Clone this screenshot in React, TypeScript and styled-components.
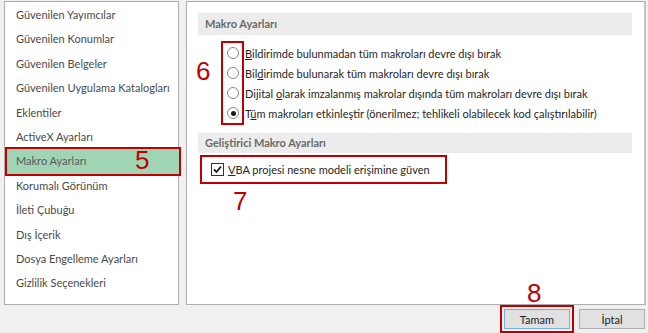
import styled, { createGlobalStyle } from "styled-components";

const GlobalStyle = createGlobalStyle`
  html, body {
    margin: 0;
    padding: 0;
    background: #f0f0f0;
  }
`;

const sidebarItems = [
  "Güvenilen Yayımcılar",
  "Güvenilen Konumlar",
  "Güvenilen Belgeler",
  "Güvenilen Uygulama Katalogları",
  "Eklentiler",
  "ActiveX Ayarları",
  "Makro Ayarları",
  "Korumalı Görünüm",
  "İleti Çubuğu",
  "Dış İçerik",
  "Dosya Engelleme Ayarları",
  "Gizlilik Seçenekleri",
];

const SELECTED = 6;

const macroOptions = [
  { pre: "", key: "B", post: "ildirimde bulunmadan tüm makroları devre dışı bırak" },
  { pre: "Bil", key: "d", post: "irimde bulunarak tüm makroları devre dışı bırak" },
  { pre: "Dijital ", key: "o", post: "larak imzalanmış makrolar dışında tüm makroları devre dışı bırak" },
  { pre: "T", key: "ü", post: "m makroları etkinleştir (önerilmez; tehlikeli olabilecek kod çalıştırılabilir)" },
];

const App = () => {
  return (
    <Window>
      <GlobalStyle />
      <Panels>
        <Sidebar>
          {sidebarItems.map((label, i) => (
            <SidebarItem key={label} $selected={i === SELECTED}>
              {label}
            </SidebarItem>
          ))}
        </Sidebar>

        <Content>
          <SectionTitle>Makro Ayarları</SectionTitle>
          <OptionList>
            {macroOptions.map((o, i) => (
              <OptionRow key={i}>
                <Radio $checked={i === 3} />
                <span>
                  {o.pre}
                  <u>{o.key}</u>
                  {o.post}
                </span>
              </OptionRow>
            ))}
          </OptionList>

          <SectionTitle $compact>Geliştirici Makro Ayarları</SectionTitle>
          <CheckRow>
            <CheckBox>
              <svg width="9" height="9" viewBox="0 0 9 9">
                <path d="M1 4.5 L3.5 7 L8 1.5" fill="none" stroke="#1a1a1a" strokeWidth="1.8" />
              </svg>
            </CheckBox>
            <span>
              <u>V</u>BA projesi nesne modeli erişimine güven
            </span>
          </CheckRow>
        </Content>
      </Panels>

      <Footer>
        <Button $primary>Tamam</Button>
        <Button>İptal</Button>
      </Footer>

      {/* kırmızı açıklama işaretleri */}
      <RadioMark />
      <Num style={{ left: 135, top: 147 }}>5</Num>
      <Num style={{ left: 196, top: 58 }}>6</Num>
      <Num style={{ left: 233, top: 188 }}>7</Num>
      <Num style={{ left: 527, top: 280 }}>8</Num>
    </Window>
  );
};

const Window = styled.div`
  position: relative;
  width: 648px;
  height: 333px;
  box-sizing: border-box;
  padding: 1px 2px 0 4px;
  background: #f0f0f0;
  font-family: Lato, "Liberation Sans", sans-serif;
  font-size: 11px;
  color: #262626;
  overflow: hidden;
`;

const Panels = styled.div`
  display: flex;
  gap: 7px;
  height: 304px;
`;

const Sidebar = styled.div`
  width: 175px;
  box-sizing: border-box;
  border: 1px solid #adadad;
  background: #fff;
  padding-top: 1px;
`;

const SidebarItem = styled.div<{ $selected?: boolean }>`
  height: 24.4px;
  line-height: 24.4px;
  padding-left: 11px;
  color: #4a4a4a;
  white-space: nowrap;

  ${(p) =>
    p.$selected &&
    `
    box-sizing: border-box;
    height: 28.4px;
    line-height: 24.4px;
    margin: -2px -3px -2px 0;
    padding-left: 9px;
    border: 2px solid #c00000;
    background: #9fd5b5;
    color: #5a5a5a;
  `}
`;

const Content = styled.div`
  position: relative;
  flex: 1;
  box-sizing: border-box;
  border: 1px solid #adadad;
  border-right: 2px solid #c4c4c4;
  background: #fff;
  padding: 11px 12px 0 11px;
`;

const SectionTitle = styled.div<{ $compact?: boolean }>`
  height: ${(p) => (p.$compact ? 20 : 22)}px;
  line-height: ${(p) => (p.$compact ? 20 : 22)}px;
  margin-top: ${(p) => (p.$compact ? 10 : 0)}px;
  padding-left: 7px;
  background: #ececec;
  color: #6a6a6a;
  font-weight: 700;
`;

const OptionList = styled.div`
  margin-top: 8px;
  padding-left: 29px;
`;

const OptionRow = styled.div`
  display: flex;
  align-items: center;
  gap: 6px;
  height: 20px;
  white-space: nowrap;
`;

const Radio = styled.span<{ $checked?: boolean }>`
  position: relative;
  flex: none;
  width: 12px;
  height: 12px;
  box-sizing: border-box;
  border: 1px solid #8a8a8a;
  border-radius: 50%;
  background: #fff;

  &::after {
    content: "";
    display: ${(p) => (p.$checked ? "block" : "none")};
    position: absolute;
    left: 2.5px;
    top: 2.5px;
    width: 5px;
    height: 5px;
    border-radius: 50%;
    background: #1a1a1a;
  }
`;

const CheckRow = styled.div`
  display: flex;
  align-items: center;
  gap: 4px;
  width: 247px;
  height: 29px;
  box-sizing: border-box;
  margin: 2px 0 0 2px;
  padding-left: 9px;
  border: 2px solid #c00000;
  white-space: nowrap;
`;

const CheckBox = styled.span`
  display: flex;
  align-items: center;
  justify-content: center;
  flex: none;
  width: 13px;
  height: 13px;
  box-sizing: border-box;
  border: 1px solid #333;
  background: #fff;
`;

const Footer = styled.div`
  display: flex;
  justify-content: flex-end;
  gap: 9px;
  padding: 4px 1px 0 0;
`;

const Button = styled.button<{ $primary?: boolean }>`
  width: 66px;
  height: 20px;
  padding: 0;
  font: inherit;
  color: #222;
  background: #e1e1e1;
  border: 1px solid ${(p) => (p.$primary ? "#7aaee0" : "#adadad")};
  ${(p) =>
    p.$primary &&
    `
    outline: 2px solid #c00000;
    outline-offset: 2px;
  `}
`;

const RadioMark = styled.div`
  position: absolute;
  left: 221px;
  top: 41px;
  width: 23px;
  height: 84px;
  box-sizing: border-box;
  border: 2px solid #c00000;
`;

const Num = styled.div`
  position: absolute;
  font-family: "Liberation Sans", Arial, sans-serif;
  font-size: 26px;
  line-height: 1;
  color: #c00000;
`;

export default App;
